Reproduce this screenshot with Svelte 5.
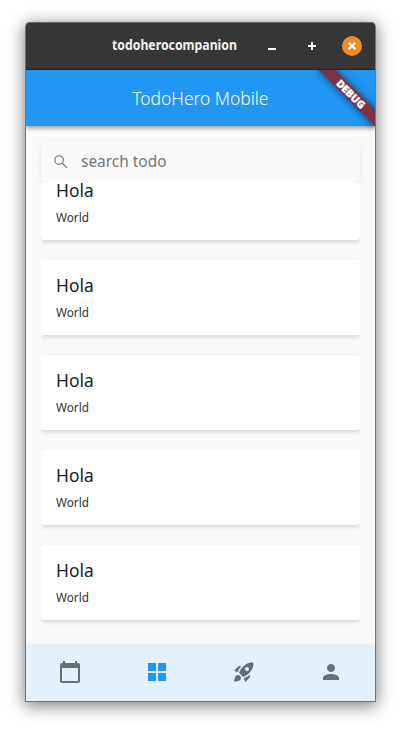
<script>
  const todos = Array.from({ length: 5 }, (_, id) => ({ id, title: 'Hola', body: 'World' }));
  const tabs = [
    {
      name: 'Calendar',
      path: 'M20 3h-1V1h-2v2H7V1H5v2H4c-1.1 0-2 .9-2 2v16c0 1.1.9 2 2 2h16c1.1 0 2-.9 2-2V5c0-1.1-.9-2-2-2zm0 18H4V8h16v13z'
    },
    { name: 'Board', path: 'M3 3h8v8H3zM13 3h8v8h-8zM3 13h8v8H3zM13 13h8v8h-8z' },
    {
      name: 'Launch',
      path: 'M9.19 6.35c-2.04 2.29-3.44 5.58-3.57 5.89L2 10.69l4.05-4.05c.47-.47 1.15-.68 1.81-.55l1.33.26zM11.17 17s3.74-1.55 5.89-3.7c5.4-5.4 4.5-9.62 4.21-10.57-.95-.3-5.17-1.19-10.57 4.21C8.55 9.09 7 12.83 7 12.83L11.17 17zm6.48-2.19c-2.29 2.04-5.58 3.44-5.89 3.57L13.31 22l4.05-4.05c.47-.47.68-1.15.55-1.81l-.26-1.33zM9 18c0 .83-.34 1.58-.88 2.12C6.94 21.3 2 22 2 22s.7-4.94 1.88-6.12C4.42 15.34 5.17 15 6 15c1.66 0 3 1.34 3 3zm4-9c0-1.1.9-2 2-2s2 .9 2 2-.9 2-2 2-2-.9-2-2z'
    },
    {
      name: 'Profile',
      path: 'M12 12c2.21 0 4-1.79 4-4s-1.79-4-4-4-4 1.79-4 4 1.79 4 4 4zm0 2c-2.67 0-8 1.34-8 4v2h16v-2c0-2.66-5.33-4-8-4z'
    }
  ];
  let active = $state(1);
</script>

<div class="desktop">
  <div class="window">
    <header class="titlebar">
      <span class="name">todoherocompanion</span>
      <div class="controls">
        <svg width="20" height="20" viewBox="0 0 20 20"><path d="M6 12h8v2H6z" fill="#fff" /></svg>
        <svg width="20" height="20" viewBox="0 0 20 20"><path d="M9 6h2v3h3v2h-3v3H9v-3H6V9h3z" fill="#fff" /></svg>
        <svg width="20" height="20" viewBox="0 0 20 20">
          <circle cx="10" cy="10" r="10" fill="#f08c2c" />
          <path d="M6.7 6.7l6.6 6.6M13.3 6.7l-6.6 6.6" stroke="#fff" stroke-width="2.1" />
        </svg>
      </div>
    </header>

    <div class="app">
      <div class="appbar"><h1>TodoHero Mobile</h1></div>
      <div class="banner"><span>DEBUG</span></div>

      <main>
        <div class="search">
          <svg width="18" height="18" viewBox="0 0 18 18">
            <circle cx="7.1" cy="7.1" r="4.3" />
            <path d="M10.3 10.3l4.8 4.8" />
          </svg>
          <span>search todo</span>
        </div>
        <div class="list">
          {#each todos as todo (todo.id)}
            <article>
              <h2>{todo.title}</h2>
              <p>{todo.body}</p>
            </article>
          {/each}
        </div>
      </main>

      <nav>
        {#each tabs as tab, i}
          <button class:active={active === i} aria-label={tab.name} onclick={() => (active = i)}>
            <svg width="24" height="24" viewBox="0 0 24 24"><path d={tab.path} /></svg>
          </button>
        {/each}
      </nav>
    </div>
  </div>
</div>

<style>
  .desktop {
    box-sizing: border-box;
    width: 401px;
    height: 730px;
    padding: 22px 25px 28px;
    background: #fff;
    overflow: hidden;
    font-family: 'Noto Sans', 'Open Sans', sans-serif;
  }
  .window {
    box-sizing: border-box;
    height: 680px;
    border: 1px solid #747776;
    border-top: 0;
    border-radius: 5px 5px 0 0;
    display: flex;
    flex-direction: column;
    background: #fafafa;
    box-shadow: 0 3px 16px 1px rgba(0, 0, 0, 0.5);
  }
  .titlebar {
    box-sizing: border-box;
    flex: 0 0 48px;
    border-top: 1px solid #666;
    border-bottom: 1px solid #232323;
    border-radius: 4px 4px 0 0;
    background: #363636;
    display: flex;
    align-items: center;
    justify-content: space-between;
    padding: 0 13px 0 86px;
  }
  .name {
    width: 125px;
    color: #f2f2f2;
    font-size: 14px;
    font-weight: 700;
    line-height: 20px;
    margin-top: -2px;
    white-space: nowrap;
    transform: scaleX(0.876);
    transform-origin: 0 50%;
  }
  .controls {
    display: flex;
    gap: 20px;
  }
  .controls svg {
    display: block;
  }
  .app {
    position: relative;
    flex: 1;
    min-height: 0;
    display: flex;
    flex-direction: column;
    overflow: hidden;
  }
  .appbar {
    flex: 0 0 56px;
    display: flex;
    align-items: center;
    justify-content: center;
    background: #2196f3;
    box-shadow: 0 2px 4px rgba(0, 0, 0, 0.3), 0 1px 6px rgba(0, 0, 0, 0.15);
    z-index: 1;
  }
  h1 {
    margin: 0;
    color: #fff;
    font-size: 18px;
    font-weight: 300;
    line-height: 24px;
    white-space: nowrap;
    transform: scaleX(0.968);
  }
  .banner {
    position: absolute;
    z-index: 2;
    left: 100%;
    top: 0;
    width: 80px;
    height: 12px;
    transform: rotate(45deg) translate(-40px, 28px);
    transform-origin: 0 0;
    background: #7d3349;
    box-shadow: 0 0 8px rgba(0, 0, 0, 0.55);
    display: flex;
    align-items: center;
    justify-content: center;
    color: #fff;
    font-size: 10.4px;
    font-weight: 900;
    line-height: 12px;
    -webkit-text-stroke: 0.3px #fff;
  }
  main {
    flex: 1;
    min-height: 0;
    display: flex;
    flex-direction: column;
    padding: 15px 15px 5px;
  }
  .search {
    flex: 0 0 42px;
    display: flex;
    align-items: center;
    gap: 11px;
    padding-left: 11px;
    border-radius: 5px;
    background: #fafafa;
    box-shadow: 0 2px 7px rgba(0, 0, 0, 0.07);
    color: #757575;
    font-size: 16px;
    line-height: 22px;
  }
  .search svg {
    fill: none;
    stroke: #808080;
    stroke-width: 1.25;
  }
  .search span {
    margin-top: -2px;
    transform: scaleX(0.964);
    transform-origin: 0 50%;
  }
  .list {
    position: relative;
    flex: 1;
    min-height: 0;
    overflow: hidden;
    display: flex;
    flex-direction: column;
    justify-content: flex-end;
    gap: 20px;
    padding-bottom: 20px;
  }
  article {
    box-sizing: border-box;
    flex: 0 0 75px;
    padding: 13px 15px 0;
    border-radius: 3px;
    background: #fff;
    box-shadow: 0 2px 4px rgba(0, 0, 0, 0.15);
  }
  h2 {
    margin: 0;
    color: #212121;
    font-size: 18px;
    font-weight: 400;
    line-height: 24px;
    transform: scaleX(0.968);
    transform-origin: 0 50%;
  }
  p {
    margin: 8px 0 0;
    color: #333;
    font-size: 12px;
    line-height: 16px;
    transform: scaleX(0.98);
    transform-origin: 0 50%;
  }
  nav {
    flex: 0 0 56px;
    display: flex;
    background: #e3f1fc;
    box-shadow: 0 0 3px rgba(0, 0, 0, 0.12);
  }
  button {
    flex: 1;
    display: flex;
    align-items: center;
    justify-content: center;
    padding: 0 0 2px;
    border: 0;
    background: none;
  }
  button svg {
    fill: #666f75;
  }
  button.active svg {
    fill: #2196f3;
  }
</style>
